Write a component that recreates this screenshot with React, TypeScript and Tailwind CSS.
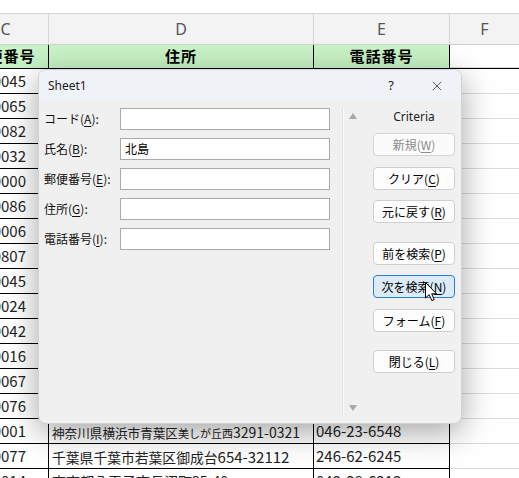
import { X } from "lucide-react";

const JP = { fontFamily: '"Noto Sans CJK JP", "Noto Sans", sans-serif' };
const UI = { fontFamily: '"Noto Sans", "Noto Sans CJK JP", sans-serif' };

const codes = ["0045", "0065", "0082", "0032", "0000", "0086", "0006", "0807", "0045", "0024", "0042", "0016", "0067", "0076", "0001", "0077", "0014"];

function Mn({ t, k }: { t: string; k: string }) {
  return (
    <>
      {t}(<span className="underline underline-offset-2">{k}</span>)
    </>
  );
}

function Btn({ children, disabled, focus, className = "" }: { children: React.ReactNode; disabled?: boolean; focus?: boolean; className?: string }) {
  const base = "flex h-[23px] w-[82px] items-center justify-center rounded-[4px] border text-[12px] leading-none";
  const look = disabled
    ? "border-[#d4d4d4] bg-[#fbfbfb] text-[#8c8c8c]"
    : focus
    ? "border-[#2f7fd0] bg-[#dcebf8] text-black"
    : "border-[#cfcfcf] bg-[#fdfdfd] text-black";
  return <div className={`${base} ${look} ${className}`}>{children}</div>;
}

function Row({ code, d, e }: { code: string; d?: React.ReactNode; e?: string }) {
  return (
    <div className="flex h-[25px] border-b border-black">
      <div className="-ml-[41px] flex w-[90px] shrink-0 items-center justify-end border-r border-black pr-[22px] text-[15px] text-[#222]">{code}</div>
      <div className="flex w-[265px] shrink-0 items-center border-r border-black pl-[3px] text-[#222]">{d}</div>
      <div className="flex w-[136px] shrink-0 items-center border-r border-black pl-[2px] text-[15px] text-[#222]">{e}</div>
      <div className="flex-1 border-b border-[#dcdcdc] -mb-px" />
    </div>
  );
}

function Cursor() {
  return (
    <svg width="13" height="20" viewBox="0 0 13 20" className="absolute left-[425px] top-[282px]">
      <path d="M0.5 0.5 L0.5 16 L4.2 12.6 L6.8 18.6 L9.2 17.6 L6.7 11.8 L11.6 11.8 Z" fill="white" stroke="black" strokeWidth="1" strokeLinejoin="round" />
    </svg>
  );
}

export default function App() {
  const labels: [string, string][] = [
    ["コード", "A"],
    ["氏名", "B"],
    ["郵便番号", "E"],
    ["住所", "G"],
    ["電話番号", "I"],
  ];
  const values = ["", "北島", "", "", ""];

  return (
    <div className="relative h-[478px] w-[519px] overflow-hidden bg-white" style={JP}>
      {/* sheet */}
      <div className="h-[14px] border-b border-[#d4d4d4] bg-white" />
      <div className="flex h-[31px] border-b border-[#d0d0d0] bg-[#f3f3f3] text-[16px] text-[#555]" style={UI}>
        <div className="-ml-[41px] flex w-[90px] shrink-0 items-center justify-center border-r border-[#d6d6d6] pl-[4px]">C</div>
        <div className="flex w-[265px] shrink-0 items-center justify-center border-r border-[#d6d6d6]">D</div>
        <div className="flex w-[136px] shrink-0 items-center justify-center border-r border-[#d6d6d6]">E</div>
        <div className="flex flex-1 items-center justify-center">F</div>
      </div>
      <div className="flex h-[24px] border-b border-black text-[15px] font-bold tracking-[1px] text-black">
        <div className="-ml-[41px] flex w-[90px] shrink-0 items-center justify-center border-r border-black bg-[#c8f3c6]">郵便番号</div>
        <div className="flex w-[265px] shrink-0 items-center justify-center border-r border-black bg-[#c8f3c6]">住所</div>
        <div className="flex w-[136px] shrink-0 items-center justify-center border-r border-black bg-[#c8f3c6]">電話番号</div>
        <div className="flex-1 border-b border-[#dcdcdc]" />
      </div>
      {codes.map((c, i) => {
        let d: React.ReactNode = null;
        let e = "";
        if (i === 14) {
          d = (
            <span className="whitespace-nowrap">
              <span className="text-[12.6px]">神奈川県横浜市青葉区</span>
              <span className="text-[11px]">美しが丘西</span>
              <span className="text-[14px]">3291-0321</span>
            </span>
          );
          e = "046-23-6548";
        } else if (i === 15) {
          d = (
            <span className="whitespace-nowrap">
              <span className="text-[13.8px]">千葉県千葉市若葉区御成台</span>
              <span className="text-[15px]">654-32112</span>
            </span>
          );
          e = "246-62-6245";
        } else if (i === 16) {
          d = <span className="whitespace-nowrap text-[14px]">東京都八王子市長沼町35-40</span>;
          e = "042-38-6313";
        }
        return <Row key={i} code={c} d={d} e={e} />;
      })}

      {/* dialog */}
      <div className="absolute left-[38px] top-[69px] flex h-[355px] w-[424px] flex-col overflow-hidden rounded-[8px] border border-[#d2d2d2] bg-[#f0f0f0] shadow-[0_8px_32px_rgba(0,0,0,0.36)]">
        <div className="flex h-[31px] shrink-0 items-center bg-[#eff3f8] pl-[9px] text-[12px] text-[#1a1a1a]" style={UI}>
          <span>Sheet1</span>
          <span className="ml-auto mr-[35px] text-[13px]">?</span>
          <X size={16} strokeWidth={1.1} className="mr-[16px] text-[#222]" />
        </div>
        <div className="flex flex-1">
          <div className="flex w-[303px] shrink-0 flex-col gap-[8px] pl-[5px] pt-[7px]">
            {labels.map(([t, k], i) => (
              <div key={i} className="flex h-[22px] items-center">
                <div className="w-[76px] shrink-0 text-[12px] text-[#111]">
                  <Mn t={t} k={k} />:
                </div>
                <div className="flex h-[22px] w-[210px] items-center border border-[#ababab] bg-white pl-[4px] text-[12px] text-black">{values[i]}</div>
              </div>
            ))}
          </div>
          <div className="mb-[9px] mt-[7px] w-[2px] border-l border-[#e2e2e2] bg-[#fafafa]" />
          <div className="mb-[9px] mt-[12px] flex w-[17px] flex-col items-center justify-between">
            <svg width="8" height="6" viewBox="0 0 8 6"><path d="M4 0 L8 6 L0 6 Z" fill="#a8a8a8" /></svg>
            <svg width="8" height="6" viewBox="0 0 8 6" className="mb-[3px]"><path d="M0 0 L8 0 L4 6 Z" fill="#a8a8a8" /></svg>
          </div>
          <div className="ml-[12px] flex flex-col">
            <div className="mt-[7px] flex h-[17px] w-[82px] items-center justify-center text-[12px] text-[#222]" style={UI}>Criteria</div>
            <Btn disabled className="mt-[8px]"><Mn t="新規" k="W" /></Btn>
            <Btn className="mt-[11px]"><Mn t="クリア" k="C" /></Btn>
            <Btn className="mt-[10px]"><Mn t="元に戻す" k="R" /></Btn>
            <Btn className="mt-[19px]"><Mn t="前を検索" k="P" /></Btn>
            <Btn focus className="mt-[10px]"><Mn t="次を検索" k="N" /></Btn>
            <Btn className="mt-[11px]"><Mn t="フォーム" k="F" /></Btn>
            <Btn className="mt-[18px]"><Mn t="閉じる" k="L" /></Btn>
          </div>
        </div>
      </div>
      <Cursor />
    </div>
  );
}
